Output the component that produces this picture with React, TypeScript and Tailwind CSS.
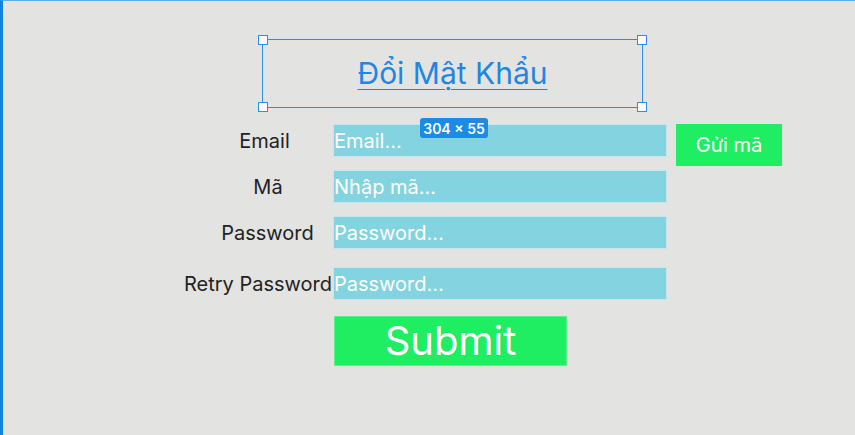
import React from "react";

const font = { fontFamily: "Inter, 'Noto Sans', sans-serif" };

function Handle({ pos }: { pos: string }) {
  return (
    <div
      className={`absolute w-[10px] h-[10px] bg-white border-[1.5px] border-[#2a8fe6] ${pos}`}
    />
  );
}

function Row({
  label,
  placeholder,
  labelClass,
  mt,
  children,
}: {
  label: string;
  placeholder: string;
  labelClass: string;
  mt: string;
  children?: React.ReactNode;
}) {
  return (
    <div className={`flex items-start ${mt}`}>
      <div
        className={`w-[150px] h-[33px] flex items-center justify-center text-[20px] text-[#222] whitespace-nowrap ${labelClass}`}
      >
        {label}
      </div>
      <input
        placeholder={placeholder}
        className="w-[334px] h-[33px] bg-[#84d3e0] border border-[#c6e6ec] px-0 text-[20px] text-white placeholder:text-white outline-none"
      />
      {children}
    </div>
  );
}

export default function App() {
  return (
    <div
      className="w-[855px] h-[435px] bg-[#e3e3e2] border-t border-t-[#5aaeea] border-l-[3px] border-l-[#0d85e2] overflow-hidden"
      style={font}
    >
      <div className="pt-[38px] pl-[259px]">
        <div className="relative w-[381px] h-[69px] border border-[#2a8fe6] flex items-center justify-center">
          <Handle pos="-top-[5px] -left-[5px]" />
          <Handle pos="-top-[5px] -right-[5px]" />
          <Handle pos="-bottom-[5px] -left-[5px]" />
          <Handle pos="-bottom-[5px] -right-[5px]" />
          <span className="text-[30px] text-[#1f86e2] underline underline-offset-[5px] decoration-1 -mt-[1px]">
            Đổi Mật Khẩu
          </span>
          <div className="absolute top-[78px] left-[157px] w-[68px] h-[20px] rounded-[3px] bg-[#1a8be6] text-white text-[14px] font-semibold flex items-center justify-center z-10">
            304 × 55
          </div>
        </div>
      </div>
      <div className="pl-[180px]">
        <Row label="Email" placeholder="Email..." labelClass="pl-[13px]" mt="mt-[16px]">
          <button className="ml-[9px] w-[106px] h-[42px] bg-[#20ee62] text-white text-[20px]">
            Gửi mã
          </button>
        </Row>
        <Row label="Mã" placeholder="Nhập mã..." labelClass="pl-[20px]" mt="mt-[4px]" />
        <Row label="Password" placeholder="Password..." labelClass="pl-[19px]" mt="mt-[13px]" />
        <Row label="Retry Password" placeholder="Password..." labelClass="" mt="mt-[18px]" />
        <div className="mt-[16px] ml-[151px]">
          <button className="w-[233px] h-[50px] bg-[#20ee62] border border-[#5ef08c] text-white text-[40px] leading-none flex items-center justify-center">
            Submit
          </button>
        </div>
      </div>
    </div>
  );
}
